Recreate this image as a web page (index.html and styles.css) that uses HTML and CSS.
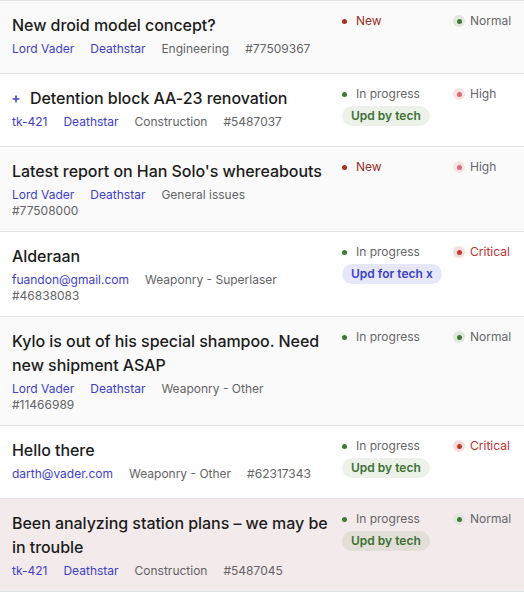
FILE: index.html
```html
<!DOCTYPE html>
<html lang="en">
<head>
<meta charset="utf-8">
<title>Tickets</title>
<link rel="stylesheet" href="styles.css">
</head>
<body>
<div class="list">
  <div class="row row--muted">
    <div class="main">
      <div class="title">New droid model concept?</div>
      <div class="meta"><a class="link">Lord Vader</a><a class="link">Deathstar</a><span class="tag">Engineering</span><span class="tag">#77509367</span></div>
    </div>
    <div class="side">
      <div class="status status--new"><span class="dot"></span>New</div>
    </div>
    <div class="prio prio--normal"><span class="ind"><span class="dot"></span></span>Normal</div>
  </div>

  <div class="row">
    <div class="main">
      <div class="title"><svg class="plus" width="8" height="8" viewBox="0 0 8 8"><path d="M4 0.5V7.5M0.5 4H7.5" stroke="#4545c8" stroke-width="1.6" fill="none"/></svg>Detention block AA-23 renovation</div>
      <div class="meta"><a class="link">tk-421</a><a class="link">Deathstar</a><span class="tag">Construction</span><span class="tag">#5487037</span></div>
    </div>
    <div class="side">
      <div class="status status--progress"><span class="dot"></span>In progress</div>
      <span class="badge badge--green">Upd by tech</span>
    </div>
    <div class="prio prio--high"><span class="ind"><span class="dot"></span></span>High</div>
  </div>

  <div class="row row--muted">
    <div class="main">
      <div class="title">Latest report on Han Solo's whereabouts</div>
      <div class="meta"><a class="link">Lord Vader</a><a class="link">Deathstar</a><span class="tag">General issues</span><span class="tag">#77508000</span></div>
    </div>
    <div class="side">
      <div class="status status--new"><span class="dot"></span>New</div>
    </div>
    <div class="prio prio--high"><span class="ind"><span class="dot"></span></span>High</div>
  </div>

  <div class="row">
    <div class="main">
      <div class="title">Alderaan</div>
      <div class="meta"><a class="link">fuandon@gmail.com</a><span class="tag">Weaponry - Superlaser</span><span class="tag">#46838083</span></div>
    </div>
    <div class="side">
      <div class="status status--progress"><span class="dot"></span>In progress</div>
      <span class="badge badge--blue">Upd for tech x</span>
    </div>
    <div class="prio prio--critical"><span class="ind"><span class="dot"></span></span>Critical</div>
  </div>

  <div class="row row--muted">
    <div class="main">
      <div class="title">Kylo is out of his special shampoo. Need new shipment ASAP</div>
      <div class="meta"><a class="link">Lord Vader</a><a class="link">Deathstar</a><span class="tag">Weaponry - Other</span><span class="tag">#11466989</span></div>
    </div>
    <div class="side">
      <div class="status status--progress"><span class="dot"></span>In progress</div>
    </div>
    <div class="prio prio--normal"><span class="ind"><span class="dot"></span></span>Normal</div>
  </div>

  <div class="row">
    <div class="main">
      <div class="title">Hello there</div>
      <div class="meta"><a class="link">darth@vader.com</a><span class="tag">Weaponry - Other</span><span class="tag">#62317343</span></div>
    </div>
    <div class="side">
      <div class="status status--progress"><span class="dot"></span>In progress</div>
      <span class="badge badge--green">Upd by tech</span>
    </div>
    <div class="prio prio--critical"><span class="ind"><span class="dot"></span></span>Critical</div>
  </div>

  <div class="row row--selected">
    <div class="main">
      <div class="title">Been analyzing station plans – we may be in trouble</div>
      <div class="meta"><a class="link">tk-421</a><a class="link">Deathstar</a><span class="tag">Construction</span><span class="tag">#5487045</span></div>
    </div>
    <div class="side">
      <div class="status status--progress"><span class="dot"></span>In progress</div>
      <span class="badge badge--green">Upd by tech</span>
    </div>
    <div class="prio prio--normal"><span class="ind"><span class="dot"></span></span>Normal</div>
  </div>
</div>
</body>
</html>
```

FILE: styles.css
```css
* { box-sizing: border-box; }

body {
  margin: 0;
  background: #ffffff;
  font-family: Inter, "Noto Sans", sans-serif;
  color: #1e1e1e;
}

.list {
  border-top: 1px solid #e4e4e8;
}

.row {
  display: flex;
  align-items: flex-start;
  min-height: 73px;
  padding: 12px 12px 12px 12px;
  border-bottom: 1px solid #e4e4e8;
  background: #ffffff;
}

.row--muted { background: #fafafa; }
.row--selected { background: #f3eaeb; }

.main {
  flex: 1;
  min-width: 0;
  margin-right: 9px;
}

.title {
  font-size: 16px;
  line-height: 24px;
  font-weight: 500;
  color: #1c1c1c;
  letter-spacing: -0.05px;
}

.plus {
  display: inline-block;
  vertical-align: 1px;
  margin-right: 10px;
}

.meta {
  margin-top: 4px;
  display: flex;
  flex-wrap: wrap;
  font-size: 12px;
  line-height: 16px;
}

.meta > * { margin-right: 16px; }

.link { color: #3e3ecb; text-decoration: none; }
.tag { color: #646466; }

.side {
  width: 114px;
  flex: none;
  padding-left: 3px;
  display: flex;
  flex-direction: column;
  align-items: flex-start;
  gap: 4px;
}

.status, .prio {
  display: flex;
  align-items: center;
  font-size: 12px;
  line-height: 16px;
  color: #666668;
}

.status { gap: 9px; }
.prio { gap: 5px; width: 59px; flex: none; }

.ind {
  width: 12px;
  height: 12px;
  border-radius: 50%;
  display: flex;
  align-items: center;
  justify-content: center;
  flex: none;
}

.dot {
  width: 5px;
  height: 5px;
  border-radius: 50%;
  flex: none;
}

.status--new { color: #9a2d1f; }
.status--new .dot { background: #a3321f; }
.status--progress .dot { background: #3f7a34; }

.prio--normal .ind { background: #e1e7df; }
.prio--normal .dot { background: #3f7a34; }
.prio--high .ind { background: #f8e3e5; }
.prio--high .dot { background: #df6877; }
.prio--critical { color: #bf3230; }
.prio--critical .ind { background: #f7dedd; }
.prio--critical .dot { background: #c23a2a; }

.badge {
  display: inline-block;
  height: 20px;
  line-height: 20px;
  padding: 0 9px;
  border-radius: 10px;
  font-size: 12px;
  font-weight: 600;
  white-space: nowrap;
}

.badge--green { background: rgba(70, 125, 50, 0.1); color: #3d6f33; }
.badge--blue { background: #e6e8fa; color: #3b40c9; }
```
